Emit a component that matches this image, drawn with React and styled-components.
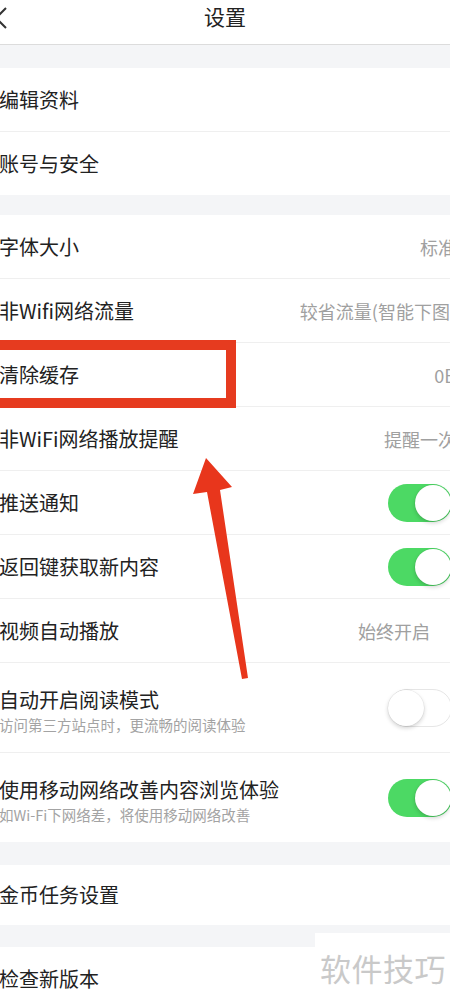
import React from "react";
import styled, { createGlobalStyle } from "styled-components";

const Global = createGlobalStyle`
  html, body { margin: 0; padding: 0; background: #f4f5f7; }
  body { font-family: "Noto Sans CJK SC", "Noto Sans", sans-serif; }
  * { box-sizing: border-box; }
`;

const Page = styled.div`
  position: relative;
  width: 450px;
  height: 1001px;
  overflow: hidden;
  background: #f4f5f7;
`;

const Header = styled.header`
  position: relative;
  height: 45px;
  background: #fff;
  border-bottom: 1px solid #dcdcdc;
  display: flex;
  align-items: center;
  justify-content: center;
`;

const Title = styled.h1`
  margin: 0;
  font-size: 21px;
  font-weight: 400;
  color: #222;
  line-height: 1;
  margin-top: -11px;
`;

const Back = styled.svg`
  position: absolute;
  left: 0;
  top: 0;
`;

const Group = styled.section`
  background: #fff;
  margin-top: ${(p) => p.$gap}px;
`;

const Row = styled.div`
  display: flex;
  align-items: center;
  height: ${(p) => p.$h || 63}px;
  border-bottom: ${(p) => (p.$last ? "none" : "1px solid #efefef")};
  background: #fff;
  box-sizing: content-box;
`;

const LabelBox = styled.div`
  flex: 1;
  display: flex;
  flex-direction: column;
  margin-left: -1px;
  gap: 4px;
  padding-top: ${(p) => (p.$two ? 6 : 0)}px;
`;

const Label = styled.span`
  font-size: 20px;
  color: #222;
  line-height: 1.2;
  white-space: nowrap;
`;

const Sub = styled.span`
  font-size: 14.5px;
  color: #a3a3a3;
  line-height: 1.2;
  white-space: nowrap;
`;

const Value = styled.span`
  font-size: 18px;
  color: #a0a0a0;
  white-space: nowrap;
  margin-right: ${(p) => p.$mr}px;
  flex-shrink: 0;
`;

const Toggle = styled.div`
  position: relative;
  width: 64px;
  height: 38px;
  border-radius: 19px;
  margin-right: -2px;
  flex-shrink: 0;
  background: ${(p) => (p.$on ? "#4cd964" : "#fff")};
  border: ${(p) => (p.$on ? "none" : "1.5px solid #e6e6e6")};
`;

const Knob = styled.div`
  position: absolute;
  top: ${(p) => (p.$on ? 1 : 0)}px;
  left: ${(p) => (p.$on ? 27 : -1)}px;
  width: 36px;
  height: 36px;
  border-radius: 50%;
  background: #fff;
  box-shadow: 0 2px 4px rgba(0, 0, 0, 0.18), 0 0 0 0.5px rgba(0, 0, 0, 0.08);
`;

const Highlight = styled.div`
  position: absolute;
  left: -12px;
  top: 340px;
  width: 248px;
  height: 68px;
  border: 10px solid #e63b1f;
`;

const Arrow = styled.svg`
  position: absolute;
  left: 0;
  top: 0;
`;

const Watermark = styled.div`
  position: absolute;
  left: 315px;
  top: 933px;
  width: 135px;
  height: 68px;
  background: #fff;
  display: flex;
  align-items: center;
  padding-left: 5px;
  font-size: 31px;
  color: #c9c9c9;
  letter-spacing: 0.5px;
`;

function Switch({ on }) {
  return (
    <Toggle $on={on}>
      <Knob $on={on} />
    </Toggle>
  );
}

export default function App() {
  return (
    <>
      <Global />
      <Page>
        <Header>
          <Back width="20" height="40" viewBox="0 0 20 40">
            <polyline points="6,8 -4,18 6,28" fill="none" stroke="#333" strokeWidth="2" />
          </Back>
          <Title>设置</Title>
        </Header>

        <Group $gap={23}>
          <Row>
            <LabelBox><Label>编辑资料</Label></LabelBox>
          </Row>
          <Row $last>
            <LabelBox><Label>账号与安全</Label></LabelBox>
          </Row>
        </Group>

        <Group $gap={20}>
          <Row>
            <LabelBox><Label>字体大小</Label></LabelBox>
            <Value $mr={-6}>标准</Value>
          </Row>
          <Row>
            <LabelBox><Label>非Wifi网络流量</Label></LabelBox>
            <Value $mr={-6}>较省流量(智能下图)</Value>
          </Row>
          <Row>
            <LabelBox><Label>清除缓存</Label></LabelBox>
            <Value $mr={-6}>0B</Value>
          </Row>
          <Row>
            <LabelBox><Label>非WiFi网络播放提醒</Label></LabelBox>
            <Value $mr={-6}>提醒一次</Value>
          </Row>
          <Row>
            <LabelBox><Label>推送通知</Label></LabelBox>
            <Switch on />
          </Row>
          <Row>
            <LabelBox><Label>返回键获取新内容</Label></LabelBox>
            <Switch on />
          </Row>
          <Row>
            <LabelBox><Label>视频自动播放</Label></LabelBox>
            <Value $mr={20}>始终开启</Value>
          </Row>
          <Row $h={89}>
            <LabelBox $two>
              <Label>自动开启阅读模式</Label>
              <Sub>访问第三方站点时，更流畅的阅读体验</Sub>
            </LabelBox>
            <Switch />
          </Row>
          <Row $h={89} $last>
            <LabelBox $two>
              <Label>使用移动网络改善内容浏览体验</Label>
              <Sub>如Wi-Fi下网络差，将使用移动网络改善</Sub>
            </LabelBox>
            <Switch on />
          </Row>
        </Group>

        <Group $gap={23}>
          <Row $h={60} $last>
            <LabelBox><Label>金币任务设置</Label></LabelBox>
          </Row>
        </Group>

        <Group $gap={22}>
          <Row $h={64}>
            <LabelBox><Label>检查新版本</Label></LabelBox>
          </Row>
        </Group>

        <Highlight />
        <Arrow width="450" height="1001" viewBox="0 0 450 1001">
          <polygon points="206,458 193,494 207,492 242,679 248,678 220,490 232,487" fill="#e8361c" />
        </Arrow>
        <Watermark>软件技巧</Watermark>
      </Page>
    </>
  );
}
